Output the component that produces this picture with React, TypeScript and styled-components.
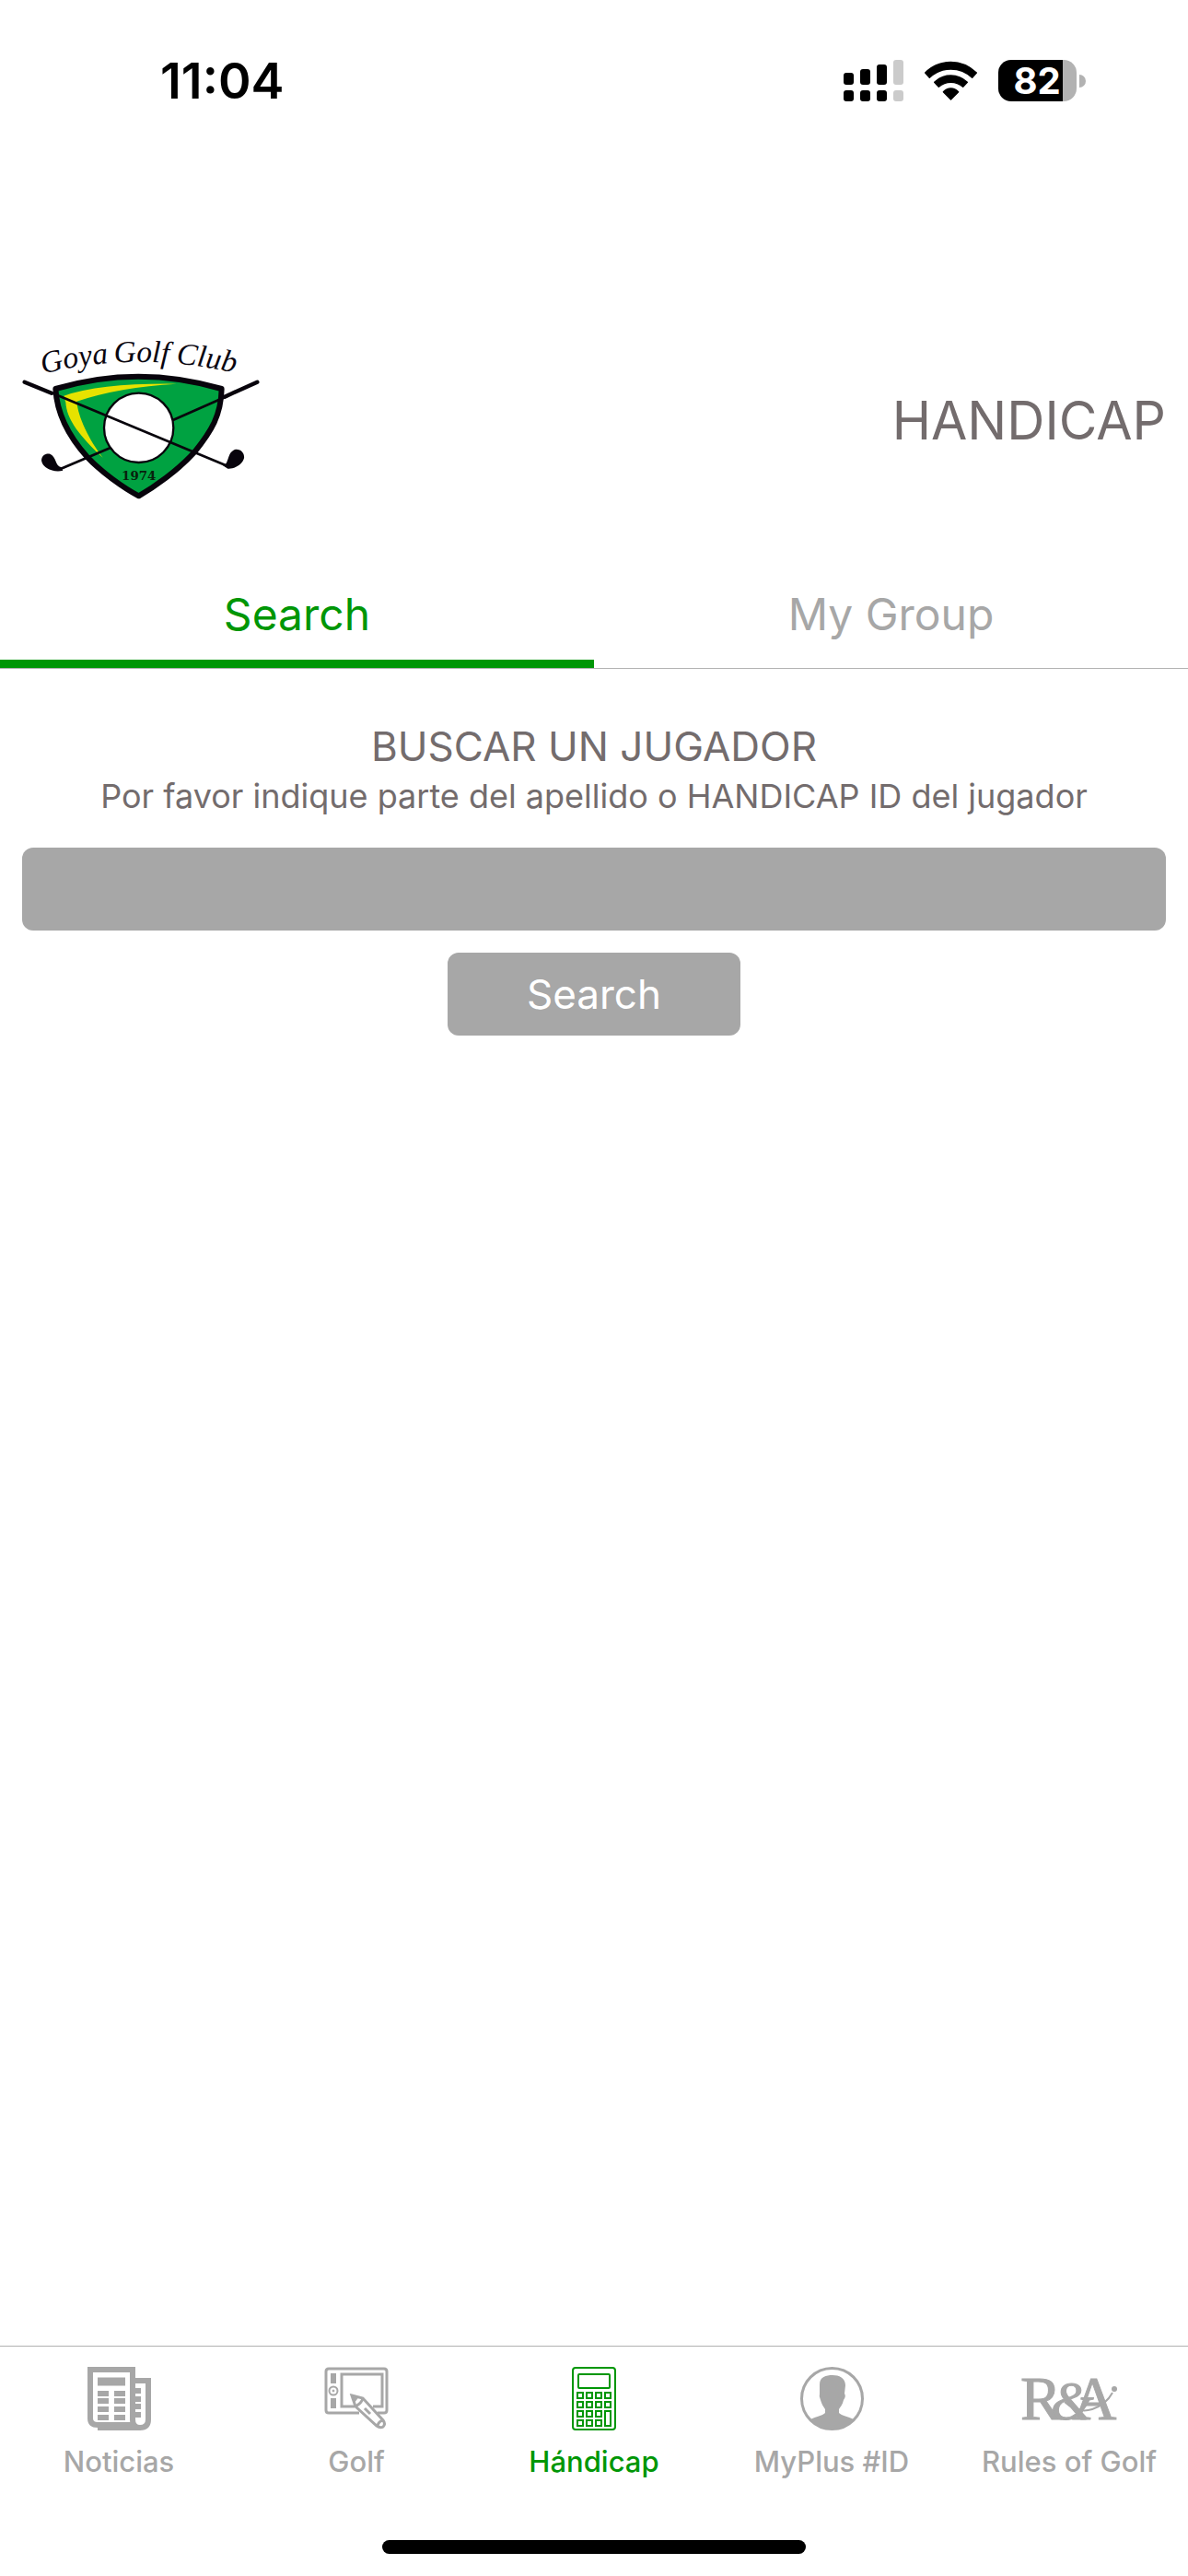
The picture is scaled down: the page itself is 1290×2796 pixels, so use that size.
import { useState } from 'react';
import { createGlobalStyle, styled } from 'styled-components';

const GREEN = '#009606';
const GRAY = '#a7a7a7';
const TEXT = '#736c6d';

const TABS = ['Search', 'My Group'];

const NAV_LIST = [
  { name: 'Noticias', icon: <NewsIcon /> },
  { name: 'Golf', icon: <TabletIcon /> },
  { name: 'Hándicap', icon: <CalculatorIcon /> },
  { name: 'MyPlus #ID', icon: <ProfileIcon /> },
  { name: 'Rules of Golf', icon: <RulesIcon /> },
];

function App() {
  const [tab, setTab] = useState('Search');
  const [query, setQuery] = useState('');

  return (
    <Screen>
      <GlobalStyle />

      <StatusBar>
        <Clock>11:04</Clock>
        <StatusIcons>
          <SignalIcon />
          <WifiIcon />
          <BatteryIcon />
        </StatusIcons>
      </StatusBar>

      <Header>
        <ClubLogo />
        <Title>HANDICAP</Title>
      </Header>

      <TabList role="tablist">
        {TABS.map((name) => (
          <Tab
            key={name}
            type="button"
            role="tab"
            aria-selected={tab === name}
            $active={tab === name}
            onClick={() => setTab(name)}
          >
            {name}
          </Tab>
        ))}
      </TabList>

      <Main>
        <SearchForm onSubmit={(e) => e.preventDefault()}>
          <FormTitle>BUSCAR UN JUGADOR</FormTitle>
          <FormLabel htmlFor="player">
            Por favor indique parte del apellido o HANDICAP ID del jugador
          </FormLabel>
          <SearchInput
            id="player"
            type="text"
            value={query}
            onChange={(e) => setQuery(e.target.value)}
          />
          <SearchButton type="submit">Search</SearchButton>
        </SearchForm>
      </Main>

      <BottomNav>
        {NAV_LIST.map((item) => (
          <NavItem key={item.name} href="#" $active={item.name === 'Hándicap'}>
            {item.icon}
            <span>{item.name}</span>
          </NavItem>
        ))}
      </BottomNav>
      <HomeArea>
        <HomeIndicator />
      </HomeArea>
    </Screen>
  );
}

export default App;


/* status bar */

function SignalIcon() {
  return (
    <svg width="65" height="45" viewBox="0 0 65 45">
      <rect x="0" y="14" width="11" height="13" rx="3" />
      <rect x="0" y="33" width="11" height="12" rx="3" />
      <rect x="18" y="10" width="11" height="17" rx="3" />
      <rect x="18" y="33" width="11" height="12" rx="3" />
      <rect x="36" y="5" width="11" height="22" rx="3" />
      <rect x="36" y="33" width="11" height="12" rx="3" />
      <rect x="54" y="0" width="11" height="27" rx="3" fill="#cbcbcb" />
      <rect x="54" y="33" width="11" height="12" rx="3" fill="#cbcbcb" />
    </svg>
  );
}

function WifiIcon() {
  return (
    <svg width="59" height="45" viewBox="309 40 177 135">
      <g stroke="#000" strokeWidth="4" strokeLinejoin="round">
        <path d="M314 82Q350 47 397.500 47T481 82L467 98Q438 70 397.500 70T328 98Z" />
        <path d="M344 113Q367 91 397.500 91T451 113L437 128Q420 113 397.500 113T358 128Z" />
        <path d="M373 144Q384 133 397.500 133T422 144L397.500 169Z" />
      </g>
    </svg>
  );
}

function BatteryIcon() {
  return (
    <svg width="93" height="45" viewBox="0 0 93 45">
      <path d="M70 0h1a14 14 0 0 1 14 14v17a14 14 0 0 1-14 14h-1z" fill="#b2b2b2" />
      <path d="M14 0h56v45H14A14 14 0 0 1 0 31V14A14 14 0 0 1 14 0z" />
      <path d="M88 16a7 7 0 0 1 0 14z" fill="#b2b2b2" />
      <text x="42" y="37" textAnchor="middle" fill="#fff" fontFamily="Inter, sans-serif" fontSize="40" fontWeight="700">
        82
      </text>
    </svg>
  );
}

/* club crest */

function ClubLogo() {
  return (
    <svg width="260" height="180" viewBox="72 46 780 540" role="img" aria-label="Goya Golf Club">
      <path id="arc" d="M140 166Q450 86 790 168" fill="none" />
      <text fontFamily="'Liberation Serif', serif" fontStyle="italic" fontSize="100" fill="#0a0610">
        <textPath href="#arc">
          Goya<tspan dx="-6"> Golf</tspan><tspan dx="-2"> Club</tspan>
        </textPath>
      </text>
      <path
        d="M181 214Q450 134 722 214C720 300 690 350 632 422C580 480 500 535 452 563C400 535 330 485 285 437C220 365 185 290 181 214Z"
        fill="#00a241"
        stroke="#08040c"
        strokeWidth="18"
        strokeLinejoin="round"
      />
      <path d="M208 237Q330 195 575 198Q390 208 250 255C254 305 290 380 335 438C262 370 217 315 214 258Z" fill="#e6e200" />
      <circle cx="452" cy="341" r="113" fill="#fff" stroke="#08040c" strokeWidth="7" />
      <g stroke="#08040c" strokeLinecap="round" fill="none">
        <path d="M80 192L168 228M838 192L732 240" strokeWidth="13" />
        <path d="M160 224L742 466" strokeWidth="8" />
        <path d="M740 238L565 315M358 407L195 476" strokeWidth="8" />
      </g>
      <path d="M726 464C748 460 738 418 768 411C788 410 797 426 795 440C790 462 762 476 742 474Z" fill="#08040c" />
      <path d="M205 480C178 488 139 474 135 447C136 430 150 423 163 426C185 436 178 464 200 470Z" fill="#08040c" />
      <text x="452" y="510" textAnchor="middle" fontFamily="'DejaVu Serif', serif" fontWeight="700" fontSize="40" fill="#08200c">
        1974
      </text>
    </svg>
  );
}

/* bottom navigation */

function NewsIcon() {
  return (
    <svg width="69" height="69" viewBox="0 0 69 69" fill="none" stroke="currentColor">
      <path d="M49 63H11Q3 63 3 56V3H49V57Q49 66 57 66Q66 66 66 57V15H52" strokeWidth="6" />
      <path d="M11 66H58" strokeWidth="6" />
      <path d="M11 16H41" strokeWidth="9" />
      <path
        d="M11 29H23M29 29H41M11 37H23M29 37H41M11 46H23M29 46H41M11 55H23M29 55H41M51 26H58M51 35H58M51 43H58M51 52H58"
        strokeWidth="6"
      />
    </svg>
  );
}

function TabletIcon() {
  return (
    <svg width="69" height="69" viewBox="0 0 69 69" fill="none" stroke="currentColor">
      <path d="M37 50H4Q1 50 1 47V5Q1 2 4 2H64Q67 2 67 5V47Q67 50 64 50H57" strokeWidth="3" />
      <path d="M32 43H18V8H62V43H52" strokeWidth="3" />
      <path d="M9 7V18M9 34V45" strokeWidth="6" />
      <circle cx="9" cy="26" r="4.500" strokeWidth="2" />
      <circle cx="9" cy="26" r="1" fill="currentColor" />
      <path d="M29 31L41 34L63 58Q66 62 63 65Q60 67 56 64L33 43Z" strokeWidth="3" />
      <path d="M41 34Q40 39 33 43M57 64Q58 59 63 58M43 45L49 51" strokeWidth="3" />
      <path d="M29 31L36 33L32 38Z" fill="currentColor" />
    </svg>
  );
}

function CalculatorIcon() {
  const keys = [];
  for (let row = 0; row < 4; row++) {
    for (let col = 0; col < 4; col++) {
      if (col < 3 || row < 2) {
        keys.push(<rect key={`${row}-${col}`} x={6 + col * 10} y={28 + row * 10} width="6" height="6" />);
      }
    }
  }
  return (
    <svg width="48" height="69" viewBox="0 0 48 69" fill="none" stroke="currentColor" strokeWidth="2">
      <rect x="1" y="1" width="46" height="67" rx="3" />
      <rect x="7" y="8" width="34" height="15" rx="1" />
      {keys}
      <rect x="36" y="48" width="6" height="16" />
    </svg>
  );
}

function ProfileIcon() {
  return (
    <svg width="69" height="69" viewBox="0 0 69 69">
      <circle cx="34.500" cy="34.500" r="33" fill="none" stroke="currentColor" strokeWidth="3" />
      <path
        d="M21 19C21 11 28 9 35 9C42 9 49 12 49 20L48 29Q50 32 47 36C46 41 43 44 42 46V50C45 53 52 54 58 57C52 65 44 68 34.500 68C25 68 17 65 11 57C17 54 24 53 27 50V46C25 43 23 40 22 36Q20 32 21 29Z"
        fill="currentColor"
      />
    </svg>
  );
}

function RulesIcon() {
  return (
    <svg width="106" height="69" viewBox="0 0 106 69" fill="currentColor">
      <text y="57" fontFamily="'Liberation Serif', serif" fontSize="67">
        <tspan x="0" stroke="currentColor" strokeWidth="1">R</tspan>
        <tspan x="33" fontSize="60" fontStyle="italic" stroke="currentColor" strokeWidth="1">&amp;</tspan>
        <tspan x="56" stroke="currentColor" strokeWidth="1">A</tspan>
      </text>
      <path d="M48 38Q62 51 78 46Q93 41 100 28" fill="none" stroke="currentColor" strokeWidth="2" />
      <circle cx="102" cy="24" r="3" />
    </svg>
  );
}


const GlobalStyle = createGlobalStyle`
* {
  box-sizing: border-box;
}

body {
  margin: 0;
  background-color: #fff;
  font-family: Inter, 'Liberation Sans', sans-serif;
}

button, input {
  font-family: inherit;
}

svg {
  overflow: visible;
}
`;

const Screen = styled.div`
display: flex;
flex-direction: column;
min-height: 100vh;
`;

const StatusBar = styled.div`
display: flex;
align-items: center;
justify-content: space-between;
height: 174px;
padding: 0 113px 0 174px;
`;

const Clock = styled.span`
font-size: 54px;
font-weight: 600;
color: #000;
`;

const StatusIcons = styled.div`
display: flex;
align-items: center;
column-gap: 22px;
`;

const Header = styled.header`
display: flex;
align-items: center;
justify-content: space-between;
padding: 192px 24px 60px;
`;

const Title = styled.h1`
margin: 0;
font-size: 57px;
font-weight: 400;
color: ${TEXT};
`;

const TabList = styled.div`
display: flex;
border-bottom: 1px solid #b2b2b2;
`;

const Tab = styled.button<{ $active: boolean }>`
flex: 1;
height: 119px;
padding: 10px 0 0;
border: none;
border-bottom: 9px solid ${(props) => (props.$active ? GREEN : 'transparent')};
background: none;
font-size: 48px;
color: ${(props) => (props.$active ? GREEN : GRAY)};
`;

const Main = styled.main`
flex: 1;
padding: 56px 24px;
`;

const SearchForm = styled.form`
display: flex;
flex-direction: column;
align-items: center;
`;

const FormTitle = styled.h2`
margin: 0;
font-size: 44px;
font-weight: 400;
line-height: 56px;
color: ${TEXT};
`;

const FormLabel = styled.label`
font-size: 36px;
line-height: 52px;
color: ${TEXT};
`;

const SearchInput = styled.input`
width: 100%;
height: 90px;
margin: 30px 0 24px;
padding: 0 24px;
border: none;
border-radius: 12px;
background-color: ${GRAY};
font-size: 44px;
color: white;
`;

const SearchButton = styled.button`
height: 90px;
width: 318px;
border: none;
border-radius: 12px;
background-color: ${GRAY};
font-size: 44px;
color: white;
`;

const BottomNav = styled.nav`
display: flex;
border-top: 1px solid #b2b2b2;
padding-top: 22px;
`;

const NavItem = styled.a<{ $active: boolean }>`
flex: 1 1 0;
min-width: 0;
display: flex;
flex-direction: column;
align-items: center;
row-gap: 14px;
font-size: 31px;
font-weight: 500;
line-height: 40px;
text-decoration: none;
color: ${(props) => (props.$active ? GREEN : GRAY)};
`;

const HomeArea = styled.div`
display: flex;
justify-content: center;
padding: 65px 0 24px;
`;

const HomeIndicator = styled.div`
width: 36%;
max-width: 460px;
height: 15px;
border-radius: 8px;
background-color: #000;
`;
